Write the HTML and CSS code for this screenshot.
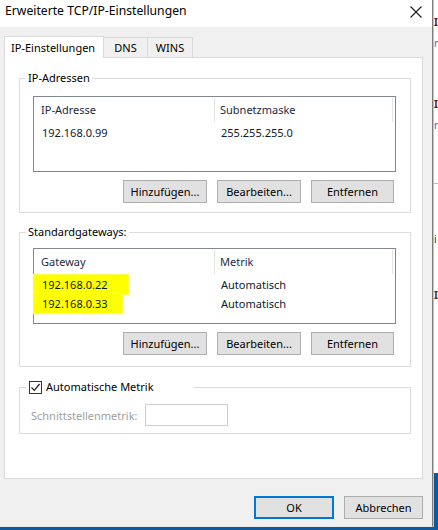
FILE: index.html
```html
<!DOCTYPE html>
<html lang="de">
<head>
<meta charset="utf-8">
<title>Erweiterte TCP/IP-Einstellungen</title>
<link rel="stylesheet" href="styles.css">
</head>
<body>
<div class="screen">
  <div class="main">
    <div class="dialog">
      <div class="titlebar">
        <span class="title">Erweiterte TCP/IP-Einstellungen</span>
        <svg class="close" width="12" height="12" viewBox="0 0 12 12"><path d="M0.5 0.5 L11.5 11.5 M11.5 0.5 L0.5 11.5" stroke="#1a1a1a" stroke-width="1.1" fill="none"/></svg>
      </div>
      <div class="body">
        <div class="tabs">
          <div class="tab active">IP-Einstellungen</div>
          <div class="tab dns">DNS</div>
          <div class="tab wins">WINS</div>
        </div>
        <div class="panel">
          <fieldset class="group g1">
            <legend>IP-Adressen</legend>
            <div class="gin">
              <div class="list">
                <div class="lhead">
                  <div class="c1">IP-Adresse</div>
                  <div class="c2">Subnetzmaske</div>
                </div>
                <div class="lrow">
                  <div class="c1">192.168.0.99</div>
                  <div class="c2">255.255.255.0</div>
                </div>
              </div>
              <div class="btns">
                <div class="btn w84">Hinzufügen...</div>
                <div class="btn w84">Bearbeiten...</div>
                <div class="btn w83">Entfernen</div>
              </div>
            </div>
          </fieldset>
          <fieldset class="group g2">
            <legend>Standardgateways:</legend>
            <div class="gin">
              <div class="list">
                <div class="lhead">
                  <div class="c1">Gateway</div>
                  <div class="c2">Metrik</div>
                </div>
                <div class="lrow">
                  <div class="c1 hlcell"><span class="hl hl1">192.168.0.22</span></div>
                  <div class="c2">Automatisch</div>
                </div>
                <div class="lrow">
                  <div class="c1 hlcell"><span class="hl hl2">192.168.0.33</span></div>
                  <div class="c2">Automatisch</div>
                </div>
              </div>
              <div class="btns">
                <div class="btn w84">Hinzufügen...</div>
                <div class="btn w84">Bearbeiten...</div>
                <div class="btn w83">Entfernen</div>
              </div>
            </div>
          </fieldset>
          <fieldset class="group g3">
            <legend class="chklegend">
              <span class="chk"><svg width="11" height="11" viewBox="0 0 11 11"><path d="M1.5 5.5 L4.3 8.4 L9.6 2" stroke="#222" stroke-width="1.2" fill="none"/></svg></span>
              <span class="chklabel">Automatische Metrik</span>
            </legend>
            <div class="gin3">
              <span class="dislabel">Schnittstellenmetrik:</span>
              <span class="input"></span>
            </div>
          </fieldset>
        </div>
        <div class="footer">
          <div class="btn ok">OK</div>
          <div class="btn cancel">Abbrechen</div>
        </div>
      </div>
    </div>
    <div class="bgwin">
      <div class="frag f1">I</div>
      <div class="frag f2">r</div>
      <div class="frag f3">I</div>
      <div class="frag f4">r</div>
      <div class="hr"></div>
      <div class="frag f5">i</div>
      <div class="frag f6">I</div>
      <div class="bgblue"></div>
    </div>
  </div>
  <div class="taskbar"></div>
</div>
</body>
</html>
```

FILE: styles.css
```css
* { box-sizing: border-box; }
html, body {
  margin: 0;
  padding: 0;
  width: 438px;
  height: 530px;
  overflow: hidden;
  background: #ffffff;
  font-family: "Noto Sans", "Open Sans", sans-serif;
  font-size: 11px;
  color: #000;
}
.screen { display: flex; flex-direction: column; height: 530px; }
.main { display: flex; height: 527px; }
.dialog {
  width: 433px;
  height: 527px;
  border-right: 1px solid #7d7d7d;
  border-bottom: 1px solid #e6e6e6;
  display: flex;
  flex-direction: column;
  background: #f0f0f0;
}
.titlebar {
  height: 27px;
  flex: none;
  background: #fff;
  display: flex;
  align-items: flex-start;
  justify-content: space-between;
  padding: 2px 10px 0 5px;
}
.title { font-size: 12.2px; line-height: 18px; color: #000; }
.close { margin-top: 4px; }

.body { flex: 1; padding: 9px 9px 0 4px; display: flex; flex-direction: column; }

.tabs { display: flex; align-items: flex-end; height: 22px; margin-bottom: -1px; flex: none; }
.tab {
  height: 20px;
  border: 1px solid #d9d9d9;
  border-bottom: none;
  background: #f0f0f0;
  line-height: 19px;
  text-align: center;
  margin-left: -1px;
  margin-bottom: 1px;
  color: #000;
}
.tab.active {
  height: 22px;
  width: 100px;
  margin-left: 0;
  margin-bottom: 0;
  background: #fff;
  position: relative;
  z-index: 1;
  line-height: 21px;
  text-align: left;
  padding-left: 6px;
}
.tab.dns { width: 45px; }
.tab.wins { width: 46px; }

.panel {
  background: #fff;
  border: 1px solid #d9d9d9;
  padding: 12px 11px 44px 14px;
  flex: none;
}
.group {
  margin: 0;
  padding: 0;
  border: 1px solid #dcdcdc;
  min-width: 0;
}
.group legend {
  padding: 0 2px;
  margin-left: 6px;
  line-height: 16px;
  height: 16px;
  color: #000;
}
.g2 { margin-top: 11px; }
.g3 { margin-top: 12px; }
.gin { padding: 10px 14px 9px 13px; }
.g2 .gin { padding: 8px 14px 11px 13px; }

.list {
  border: 1px solid #828790;
  background: #fff;
  height: 76px;
}
.lhead { display: flex; height: 26px; color: #1e2a44; }
.lhead .c1 { width: 181px; padding-left: 7px; border-right: 1px solid #e5e5e5; margin: 1px 0; line-height: 24px; }
.lhead .c2 { width: 178px; padding-left: 5px; line-height: 24px; border-right: 1px solid #e5e5e5; margin: 1px 0; }
.lrow { display: flex; height: 19px; line-height: 19px; color: #0d1a2e; }
.lrow .c1 { width: 181px; padding-left: 8px; }
.lrow .c2 { padding-left: 6px; }
.lrow .c1.hlcell { padding-left: 0; }
.hl {
  display: inline-block;
  background: #ffff00;
  height: 19px;
  padding-left: 8px;
  box-shadow: 0 0 1px 1px #fbfb50;
}
.hl1 { padding-right: 21px; }
.hl2 { padding-right: 15px; }

.btns { display: flex; justify-content: flex-end; gap: 10px; margin-top: 8px; margin-right: 2px; }
.btn {
  height: 23px;
  background: #e1e1e1;
  border: 1px solid #adadad;
  text-align: center;
  line-height: 21px;
  color: #000;
}
.w84 { width: 84px; }
.w83 { width: 83px; }

.chklegend { display: flex; align-items: center; width: 167px; padding-left: 3px !important; }
.chk {
  width: 13px;
  height: 13px;
  border: 1px solid #333;
  background: #fff;
  display: inline-flex;
  align-items: center;
  justify-content: center;
}
.chklabel { margin-left: 4px; }
.gin3 { display: flex; align-items: center; padding: 9px 0 7px 11px; }
.dislabel { width: 114px; color: #a0a0a0; }
.input { width: 83px; height: 22px; border: 1px solid #cfcfcf; background: #fff; }

.footer { display: flex; justify-content: flex-end; gap: 10px; padding-top: 17px; }
.footer .ok { width: 80px; border-color: #0078d7; box-shadow: inset 0 0 0 1px #0078d7; }
.footer .cancel { width: 79px; }

.bgwin {
  flex: 1;
  background: #fff;
  border-left: 1px solid #c4c4c4;
  display: flex;
  flex-direction: column;
  overflow: hidden;
  font-size: 10px;
}
.frag { height: 16px; line-height: 16px; white-space: nowrap; }
.f1 { margin-top: 14px; color: #5b1a2c; font-weight: bold; }
.f2 { margin-top: 5px; color: #2f6fb8; }
.f3 { margin-top: 45px; color: #5b1a2c; font-weight: bold; }
.f4 { margin-top: 5px; color: #2f6fb8; }
.hr { height: 1px; background: #bdbdbd; margin-top: 50px; }
.f5 { margin-top: 47px; color: #333; }
.f6 { margin-top: 40px; color: #333; font-weight: bold; }
.bgblue { margin-top: auto; height: 54px; background: #0f5a9c; }
.taskbar { height: 3px; background: #0f5a9c; }
```
